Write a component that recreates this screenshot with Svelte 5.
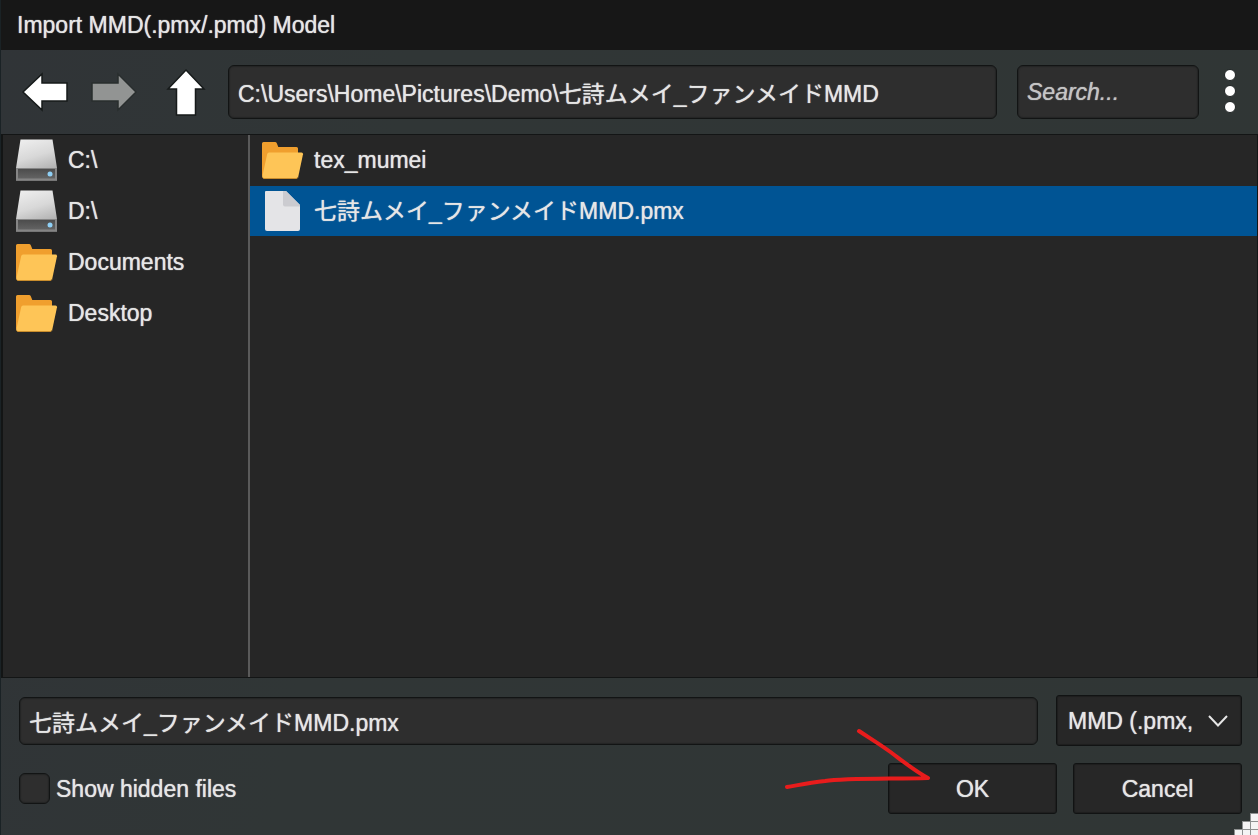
<script>
  const places = [
    { name: 'C:\\', kind: 'drive' },
    { name: 'D:\\', kind: 'drive' },
    { name: 'Documents', kind: 'folder' },
    { name: 'Desktop', kind: 'folder' }
  ];
  const entries = [
    { name: 'tex_mumei', kind: 'folder' },
    { name: '七詩ムメイ_ファンメイドMMD.pmx', kind: 'file' }
  ];

  let path = $state('C:\\Users\\Home\\Pictures\\Demo\\七詩ムメイ_ファンメイドMMD');
  let query = $state('');
  let filename = $state('七詩ムメイ_ファンメイドMMD.pmx');
  let showHidden = $state(false);
</script>

{#snippet icon(kind)}
  {#if kind === 'drive'}
    <svg class="icon" viewBox="0 0 42 42" aria-hidden="true">
      <defs>
        <linearGradient id="lid" x1="0" y1="0" x2="0.3" y2="1">
          <stop offset="0" stop-color="#f0f0f0" />
          <stop offset="0.5" stop-color="#d8d8d8" />
          <stop offset="1" stop-color="#a8a8a8" />
        </linearGradient>
        <linearGradient id="bay" x1="0" y1="0" x2="0" y2="1">
          <stop offset="0" stop-color="#4c4c4c" />
          <stop offset="1" stop-color="#636363" />
        </linearGradient>
      </defs>
      <path d="M4.5 0.5H36.5L41 29V41.5H0V29Z" fill="url(#lid)" />
      <path d="M0 29H41V41.5H0Z" fill="#858585" />
      <path d="M2 30H39V39.5H2Z" fill="url(#bay)" />
      <circle cx="34" cy="35" r="2.5" fill="#8fd0f6" />
    </svg>
  {:else if kind === 'folder'}
    <svg class="icon" viewBox="0 0 42 42" aria-hidden="true">
      <path d="M0 4.5Q0 3 1.5 3H13Q14.3 3 14.8 4.2L16.3 8H34.5Q36 8 36 9.5V35L1 38Q0 37.500 0 36Z" fill="#f09f2e" />
      <path d="M7 13.5H39.5Q41.3 13.5 41 15.2L36.3 37.5Q35.9 39.3 34 39.3H2Q0 39.3 0.3 37.5L5.2 15Q5.600 13.5 7 13.5Z" fill="#fec557" />
      <path d="M0.5 38.5Q1 39.5 2 39.5H34Q35.5 39.5 36 38.5" fill="none" stroke="#c98d2c" stroke-width="1" />
    </svg>
  {:else}
    <svg class="icon" viewBox="0 0 42 42" aria-hidden="true">
      <path d="M4 1H24L38 15V39Q38 41 36 41H5Q3 41 3 39V2Q3 1 4 1Z" fill="#e4e4e7" />
      <path d="M21 1H24L38 15V16.5H23Q21 16.5 21 14.5Z" fill="#cbcbd0" />
    </svg>
  {/if}
{/snippet}

<main class="dialog" lang="ja">
  <header class="title"><h1>Import MMD(.pmx/.pmd) Model</h1></header>

  <div class="toolbar">
    <div class="nav">
      <button class="plain" aria-label="Back">
        <svg width="48" height="48" viewBox="0 0 48 48">
          <path d="M2 24L21 6V15H46V33H21V42Z" fill="#fff" stroke="#161a1a" stroke-width="1.5" />
        </svg>
      </button>
      <button class="plain" aria-label="Forward" disabled>
        <svg width="48" height="48" viewBox="0 0 48 48">
          <path d="M46 24L28 6V15H2V33H28V42Z" fill="#929493" stroke="#292e2e" stroke-width="1.5" />
        </svg>
      </button>
      <button class="plain" aria-label="Up one folder">
        <svg width="48" height="48" viewBox="0 0 48 48">
          <path d="M27 2L45 21H36.500V47H17.500V21H9Z" fill="#fff" stroke="#161a1a" stroke-width="1.5" />
        </svg>
      </button>
    </div>
    <input class="field path" type="text" aria-label="Path" bind:value={path} />
    <input class="field search" type="text" aria-label="Search" placeholder="Search..." bind:value={query} />
    <button class="plain more" aria-label="More options">
      <svg width="16" height="48" viewBox="0 0 16 48">
        <g fill="#fff" stroke="#1f2424">
          <circle cx="8" cy="7" r="5.500" />
          <circle cx="8" cy="23" r="5.500" />
          <circle cx="8" cy="39" r="5.500" />
        </g>
      </svg>
    </button>
  </div>

  <div class="panes">
    <nav class="places" aria-label="Quick links">
      {#each places as item}
        <button class="row">{@render icon(item.kind)}<span>{item.name}</span></button>
      {/each}
    </nav>
    <section class="files" aria-label="Files">
      {#each entries as item}
        <button class="row" class:selected={item.name === filename}>
          {@render icon(item.kind)}<span>{item.name}</span>
        </button>
      {/each}
    </section>
  </div>

  <footer class="footer">
    <div class="line">
      <input class="field name" type="text" aria-label="File name" bind:value={filename} />
      <div class="filter">
        <select aria-label="File type">
          <option>MMD (.pmx, .pmd)</option>
        </select>
        <svg width="20" height="12" viewBox="0 0 20 12" aria-hidden="true">
          <path d="M1 1L10 10.5L19 1" fill="none" stroke="#e6e6e6" stroke-width="2" />
        </svg>
      </div>
    </div>
    <div class="line">
      <label class="hidden-files">
        <input type="checkbox" bind:checked={showHidden} />
        <span>Show hidden files</span>
      </label>
      <div class="actions">
        <div class="confirm">
          <button class="action">OK</button>
          <svg class="pointer" width="160" height="72" viewBox="0 0 160 72" aria-hidden="true">
            <path
              d="M79 6C91 14 98 18 109 26S136 47 148 53C112 54 65 53 45 56C28 58 19 60 7 62"
              fill="none" stroke="#e81c1c" stroke-width="4" stroke-linecap="round" stroke-linejoin="round"
            />
          </svg>
        </div>
        <button class="action">Cancel</button>
      </div>
    </div>
  </footer>

  <svg class="grip" width="24" height="22" viewBox="0 0 24 22" aria-hidden="true">
    <g fill="#f4f4f4" stroke="#8d9090">
      <rect x="16.5" y="0.5" width="8" height="8" />
      <rect x="8.5" y="8.5" width="8" height="8" />
      <rect x="16.5" y="8.5" width="8" height="8" />
      <rect x="0.5" y="16.5" width="8" height="8" />
      <rect x="8.5" y="16.5" width="8" height="8" />
      <rect x="16.5" y="16.5" width="8" height="8" />
    </g>
  </svg>
</main>

<style>
  :global(body) {
    margin: 0;
    background: #303636;
  }

  .dialog,
  .dialog * {
    box-sizing: border-box;
  }

  .dialog {
    position: relative;
    display: flex;
    flex-direction: column;
    min-height: 100vh;
    border-left: 1px solid #1a2225;
    overflow: hidden;
    background: linear-gradient(100deg, #303437 0%, #303636 30%, #303635 100%);
    color: #e6e6e6;
    font-family: 'Liberation Sans', 'Noto Sans CJK JP', sans-serif;
    font-size: 23px;
    line-height: 28px;
    text-shadow: 0 0 1px currentColor;
  }

  button,
  input,
  select {
    margin: 0;
    font: inherit;
    color: inherit;
    text-shadow: inherit;
  }

  .title {
    padding: 11px 16px;
    background: #171717;
  }

  h1 {
    margin: 0;
    font-size: 23px;
    font-weight: 400;
  }

  .toolbar {
    display: flex;
    align-items: center;
    height: 84px;
    padding: 0 20px;
  }

  .nav {
    display: flex;
    gap: 21px;
    margin-right: 21px;
  }

  .plain {
    display: flex;
    padding: 0;
    border: 0;
    background: none;
  }

  .plain svg {
    display: block;
  }

  .field {
    min-width: 0;
    padding: 0 9px;
    border: 1px solid #121414;
    border-radius: 6px;
    outline: 0;
    background: #2e2e2e;
    box-shadow: inset 0 0 1px 1px #242525;
  }

  .path {
    flex: 1;
    height: 54px;
  }

  .search {
    width: 182px;
    height: 54px;
    margin: 0 23px 0 20px;
  }

  .search::placeholder {
    color: #c4c4c4;
    font-style: italic;
    opacity: 1;
  }

  .panes {
    flex: 1;
    display: flex;
    border: solid #131515;
    border-width: 1px 1px 1px 2px;
    background: #262626;
  }

  .places {
    width: 247px;
    border-right: 2px solid #5a5a5a;
  }

  .files {
    flex: 1;
  }

  .places,
  .files {
    display: flex;
    flex-direction: column;
    gap: 1px;
  }

  .row {
    display: flex;
    align-items: center;
    gap: 10px;
    width: 100%;
    height: 50px;
    padding: 0 12px;
    border: 0;
    background: none;
    text-align: left;
    white-space: nowrap;
  }

  .places .row {
    padding: 0 13px;
  }

  .row.selected {
    background: #005494;
  }

  .icon {
    flex: none;
    width: 42px;
    height: 42px;
  }

  .footer {
    display: flex;
    flex-direction: column;
    gap: 17px;
    padding: 17px 16px 21px 18px;
  }

  .line {
    display: flex;
    align-items: center;
    justify-content: space-between;
  }

  .name {
    flex: 1;
    height: 48px;
    margin-right: 18px;
  }

  .filter {
    position: relative;
    width: 186px;
  }

  .filter svg {
    position: absolute;
    right: 14px;
    top: 20px;
    pointer-events: none;
  }

  select,
  .action {
    height: 51px;
    border: 1px solid #111313;
    border-radius: 3px;
    background: #272727;
    box-shadow: inset 0 0 1px 1px #1e1f1f;
  }

  select {
    display: block;
    width: 100%;
    padding: 0 46px 0 11px;
    appearance: none;
  }

  .hidden-files {
    display: flex;
    align-items: center;
    gap: 6px;
  }

  .hidden-files input {
    width: 31px;
    height: 31px;
    border: 1px solid #121414;
    border-radius: 6px;
    appearance: none;
    background: #2e2e2e;
    box-shadow: inset 0 0 1px 1px #242525;
  }

  .actions {
    display: flex;
    gap: 16px;
  }

  .confirm {
    position: relative;
  }

  .action {
    width: 169px;
    padding: 0;
  }

  .pointer {
    position: absolute;
    left: -108px;
    top: -38px;
    pointer-events: none;
  }

  .grip {
    position: absolute;
    right: 0;
    bottom: 0;
  }
</style>
